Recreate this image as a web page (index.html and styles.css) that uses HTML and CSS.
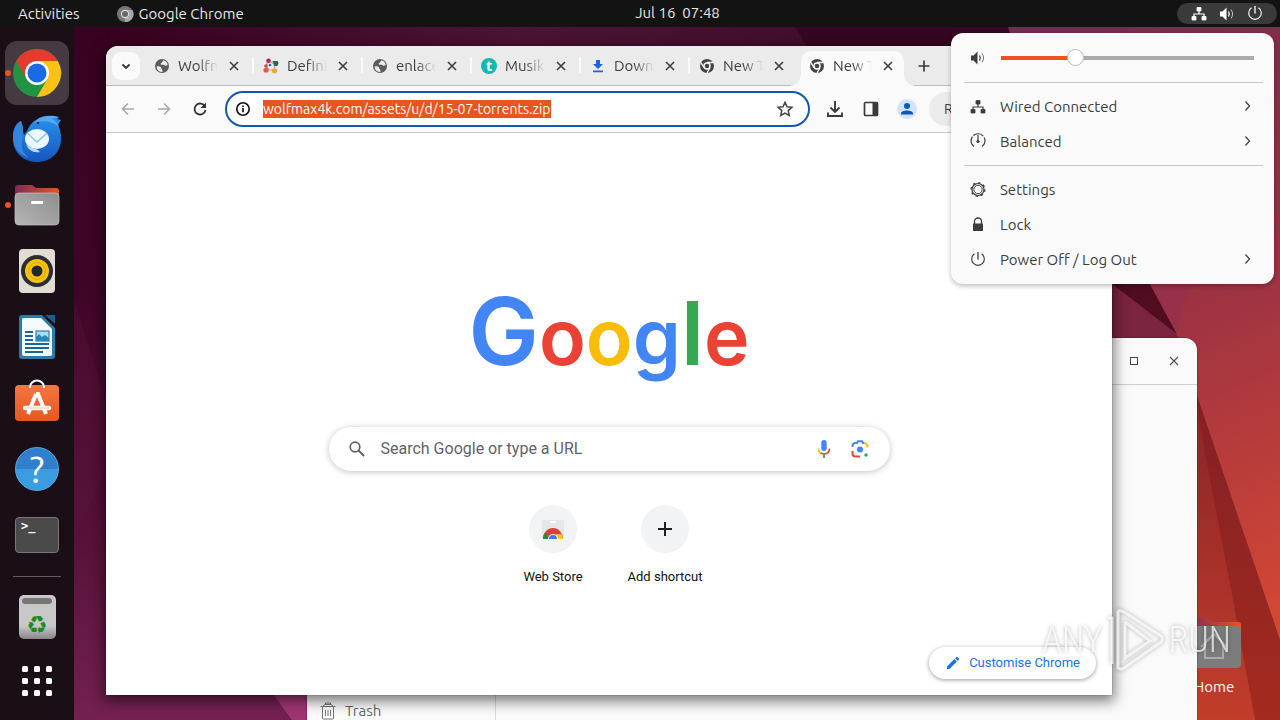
FILE: index.html
```html
<!DOCTYPE html>
<html lang="en">
<head>
<meta charset="utf-8">
<title>Desktop</title>
<link rel="stylesheet" href="styles.css">
</head>
<body>
<svg class="defs" width="0" height="0" aria-hidden="true">
  <defs>
    <symbol id="i-close" viewBox="0 0 16 16"><path d="M4 4l8 8M12 4l-8 8" stroke="currentColor" stroke-width="1.600" fill="none"/></symbol>
    <symbol id="i-globe" viewBox="0 0 16 16"><circle cx="8" cy="8" r="7" fill="#5c5c5c"/><path d="M2.800 8.200c2 .2 4.200 0 4.500 2 .2 1.300 1.500 1 1.300 3.600-3 .6-6.200-1.600-5.800-5.600zM9 2.300c2.400.2 4.200 2 4.700 4.300-.7 1.600-2.700 1.300-3.500.5-1-.9-3.200.5-3.500-1 0-1.200 2-1.200 2.300-3.800z" fill="#ebebeb"/></symbol>
    <symbol id="i-chrome-mono" viewBox="0 0 16 16"><circle cx="8" cy="8" r="7" fill="#454545"/><circle cx="8" cy="8" r="3" fill="none" stroke="#fafafa" stroke-width="1.400"/><path d="M8 4.500h6M5 9.700L2 4.600M11 9.800L8 15" stroke="#fafafa" stroke-width="1.300"/></symbol>
    <symbol id="i-net" viewBox="0 0 16 16"><path d="M6 1.500h4v3.500H6zM1 10.500h4v3.500H1zM11 10.500h4v3.500h-4z" fill="currentColor" stroke="currentColor" stroke-width=".8" stroke-linejoin="round"/><path d="M8 5v3M3 11V8h10v3" fill="none" stroke="currentColor" stroke-width="1.200"/></symbol>
    <symbol id="i-vol" viewBox="0 0 16 16"><path d="M1 5.500h2.500L7.500 1.500v13L3.500 10.500H1z" fill="currentColor"/><path d="M9.500 5.500q1.600 2.500 0 5" fill="none" stroke="currentColor" stroke-width="1.300"/><path d="M12 3.500q3.200 4.500 0 9" fill="none" stroke="currentColor" stroke-width="1" opacity=".7"/></symbol>
    <symbol id="i-power" viewBox="0 0 16 16"><path d="M4.500 1.800a6.300 6.300 0 1 0 7 0" fill="none" stroke="currentColor" stroke-width="1.100"/><path d="M8 0v7.500" stroke="currentColor" stroke-width="1.300"/></symbol>
    <symbol id="i-chev" viewBox="0 0 16 16"><path d="M6.500 2.500L10.500 7l-4 4.500" fill="none" stroke="currentColor" stroke-width="1.200"/></symbol>
  </defs>
</svg>

<div class="desktop">
  <svg class="wallpaper" viewBox="0 0 1280 720" preserveAspectRatio="none" aria-hidden="true">
    <defs>
      <linearGradient id="w-base" x1="0" y1="0" x2="0" y2="1"><stop offset="0" stop-color="#38021f"/><stop offset=".4" stop-color="#3f0527"/><stop offset=".75" stop-color="#571239"/><stop offset="1" stop-color="#742150"/></linearGradient>
      <linearGradient id="w-top" x1="0" y1="0" x2="1" y2="0"><stop offset="0" stop-color="#38021f"/><stop offset=".45" stop-color="#4b1435"/><stop offset="1" stop-color="#3c0a24"/></linearGradient>
      <linearGradient id="w-red" x1="1000" y1="27" x2="1250" y2="620" gradientUnits="userSpaceOnUse"><stop offset="0" stop-color="#772a50"/><stop offset=".45" stop-color="#963044"/><stop offset="1" stop-color="#d24634"/></linearGradient>
      <linearGradient id="w-low" x1="0" y1="400" x2="0" y2="720" gradientUnits="userSpaceOnUse"><stop offset="0" stop-color="#8a2428"/><stop offset="1" stop-color="#c23d2b"/></linearGradient>
      <linearGradient id="w-band" x1="0" y1="390" x2="0" y2="720" gradientUnits="userSpaceOnUse"><stop offset="0" stop-color="#821f26"/><stop offset="1" stop-color="#a32b1e"/></linearGradient>
    </defs>
    <rect width="1280" height="720" fill="url(#w-base)"/>
    <path d="M74 300L106 400V470L74 540Z" fill="#5f1740" opacity=".25"/>
    <path d="M106 27H1010V60H106Z" fill="url(#w-top)"/>
    <path d="M795 27L815 60H1010V27Z" fill="#370620"/>
    <path d="M270 690L292 720H310V690Z" fill="#a03573"/>
    <path d="M1008 27H1280V720H1190L1112 340Z" fill="url(#w-red)"/>
    <path d="M1105 280H1140L1180 340H1105Z" fill="#7b2440"/>
    <path d="M1112 284H1150L1177 334Z" fill="#500d20"/>
    <path d="M1150 284H1188L1177 334Z" fill="#97304a"/>
    <path d="M1195 390L1280 640V720H1190Z" fill="url(#w-low)"/>
    <path d="M1195 390L1280 640V720H1255L1233 600L1205 453Z" fill="url(#w-band)"/>
  </svg>

  <header class="topbar">
    <div class="topbar-left">
      <button class="bar-btn">Activities</button>
      <button class="bar-btn app-name">
        <svg width="16" height="16" viewBox="0 0 16 16"><circle cx="8" cy="8" r="8" fill="#777"/><path d="M8 4h7.500a8 8 0 0 1-7.500 12z" fill="#a8a8a8"/><circle cx="8" cy="8" r="4.200" fill="#ddd"/><circle cx="8" cy="8" r="3" fill="#686868"/></svg>
        Google Chrome
      </button>
    </div>
    <time class="clock">Jul 16&nbsp; 07:48</time>
    <div class="topbar-right">
      <button class="status" aria-label="System menu">
        <svg width="16" height="16"><use href="#i-net"/></svg>
        <svg width="16" height="16"><use href="#i-vol"/></svg>
        <svg width="16" height="16"><use href="#i-power"/></svg>
      </button>
    </div>
  </header>

  <nav class="dock" aria-label="Dock">
    <button class="dock-item active running" aria-label="Google Chrome">
      <svg width="48" height="48" viewBox="0 0 48 48"><circle cx="24" cy="24" r="24" fill="#229342"/><path d="M3.200 12A24 24 0 0 1 44.800 12H24L13.600 30z" fill="#e33b2e"/><path d="M44.800 12A24 24 0 0 1 24 48L34.400 30 24 12z" fill="#fbc116"/><circle cx="24" cy="24" r="12" fill="#fff"/><circle cx="24" cy="24" r="9.500" fill="#1a6ae8"/></svg>
    </button>
    <button class="dock-item" aria-label="Thunderbird">
      <svg width="50" height="48" viewBox="0 0 50 48"><defs><linearGradient id="tb" x1="0" y1="0" x2="0" y2="1"><stop offset="0" stop-color="#2c92ee"/><stop offset="1" stop-color="#1556bd"/></linearGradient></defs><path d="M9 6C3 9 1 15 1 24c0 13 10 23 24 23s24-10 24-23c0-6-1-10-3-14 1-2 2-4 3-5l-4-1 2-2C40 0 30 0 24 5c-4 2-7 6-9 11l-3 4C10 15 11 10 9 6z" fill="url(#tb)"/><path d="M9 6C1 10-1 22 3 32c3 5 8 9 14 11-5-4-8-9-7-16 0-7 3-11-1-21z" fill="#3286dd"/><path d="M22 8c6-8 17-8 25-6l-8 2c4 1 7 4 8 8-6-6-17-7-25-4z" fill="#54aaf2"/><ellipse cx="25" cy="24" rx="12" ry="10" fill="#edf7ff"/><path d="M15 18l10 9 10-9" fill="none" stroke="#8ec6e8" stroke-width="1.500"/><path d="M14 29c4 5 10 3 14 8-7 1-12-2-14-8z" fill="#b7dcf6"/><circle cx="26" cy="8" r="1.300" fill="#07336f"/></svg>
    </button>
    <button class="dock-item running" aria-label="Files">
      <svg width="46" height="42" viewBox="0 0 46 42"><defs><linearGradient id="fd" x1="0" y1="0" x2="1" y2="0"><stop offset="0" stop-color="#7d2b58"/><stop offset="1" stop-color="#e95420"/></linearGradient><linearGradient id="fg" x1="1" y1="0" x2="0" y2="1"><stop offset="0" stop-color="#8e8e8e"/><stop offset="1" stop-color="#b5b5b5"/></linearGradient></defs><path d="M1 16V4q0-3 3-3h14l4 3h20q3 0 3 3v9z" fill="url(#fd)"/><rect x="1" y="9" width="44" height="32" rx="4" fill="url(#fg)" stroke="#c4c4c4" stroke-width=".7"/><rect x="17" y="17" width="12" height="3" rx=".5" fill="#fff"/></svg>
    </button>
    <button class="dock-item" aria-label="Rhythmbox">
      <svg width="38" height="46" viewBox="0 0 38 46"><rect x="1" y="1" width="36" height="44" rx="4" fill="#e2ddd3"/><circle cx="19" cy="23" r="16" fill="#2c2d33"/><circle cx="19" cy="23" r="12" fill="#f6c30d"/><circle cx="19" cy="23" r="8.500" fill="none" stroke="#d9a90a"/><circle cx="19" cy="23" r="5.500" fill="#24272e"/></svg>
    </button>
    <button class="dock-item" aria-label="LibreOffice Writer">
      <svg width="38" height="46" viewBox="0 0 38 46"><path d="M1 4q0-3 3-3h20l13 13v28q0 3-3 3H4q-3 0-3-3z" fill="#2a7ea6"/><path d="M4 6q0-2 2-2h17l11 11v25q0 2-2 2H6q-2 0-2-2z" fill="#f5fafc"/><path d="M27 1h10v9z" fill="#19608c"/><path d="M7 18h8M7 22h8M7 26h8M7 30h24M7 34h24M7 38h18" stroke="#186a96" stroke-width="2"/><rect x="18" y="17" width="13" height="10" fill="#a8def5" stroke="#186a96"/><path d="M18 27v-4l3-3 3 3 3-2 4 3v3z" fill="#2687b8"/></svg>
    </button>
    <button class="dock-item" aria-label="Ubuntu Software">
      <svg width="46" height="46" viewBox="0 0 46 46"><defs><linearGradient id="sw" x1="0" y1="0" x2="0" y2="1"><stop offset="0" stop-color="#f37743"/><stop offset="1" stop-color="#e9561f"/></linearGradient></defs><rect x="1" y="5" width="44" height="36" rx="4" fill="url(#sw)"/><path d="M16 8V7a7 6.500 0 0 1 14 0v1" fill="none" stroke="#fff" stroke-width="2"/><path d="M22 14L14 34M22 14h2L32 34" fill="none" stroke="#fff" stroke-width="4"/><path d="M11 28h24" stroke="#fff" stroke-width="4.500" stroke-linecap="round"/><path d="M11 28h24" stroke="#f3b79c" stroke-width=".8"/></svg>
    </button>
    <button class="dock-item" aria-label="Help"><span class="help">?</span></button>
    <button class="dock-item" aria-label="Terminal"><span class="term">&gt;_</span></button>
    <hr class="dock-line">
    <button class="dock-item" aria-label="Trash"><span class="bin"><span class="bin-slot"></span><span class="bin-mark">♻</span></span></button>
    <button class="dock-item apps" aria-label="Show Applications">
      <svg width="30" height="30" viewBox="0 0 30 30" fill="#fff"><rect width="6" height="6" rx="1.500"/><rect x="12" width="6" height="6" rx="1.500"/><rect x="24" width="6" height="6" rx="1.500"/><rect y="12" width="6" height="6" rx="1.500"/><rect x="12" y="12" width="6" height="6" rx="1.500"/><rect x="24" y="12" width="6" height="6" rx="1.500"/><rect y="24" width="6" height="6" rx="1.500"/><rect x="12" y="24" width="6" height="6" rx="1.500"/><rect x="24" y="24" width="6" height="6" rx="1.500"/></svg>
    </button>
  </nav>

  <div class="home">
    <svg width="54" height="50" viewBox="0 0 54 50"><path d="M0 16V3q0-3 3-3h18l4 4h26q3 0 3 3v9z" fill="url(#fd)"/><rect y="8" width="54" height="42" rx="4" fill="#7c7c7c"/><path d="M14 29l13-13 13 13M18 27v13h18V27" fill="none" stroke="#aaa" stroke-width="2"/></svg>
    <span>Home</span>
  </div>

  <section class="files" aria-label="Files">
    <div class="files-head">
      <button class="win-btn" aria-label="Maximise"><svg width="16" height="16" viewBox="0 0 16 16"><rect x="4.500" y="4.500" width="7" height="7" fill="none" stroke="#444" stroke-width="1"/></svg></button>
      <button class="win-btn" aria-label="Close"><svg width="16" height="16" viewBox="0 0 16 16"><path d="M4 4l8 8M12 4l-8 8" stroke="#555" stroke-width="1.200"/></svg></button>
    </div>
    <div class="files-body">
      <div class="files-side">
        <a class="place" href="#trash"><svg width="16" height="18" viewBox="0 0 16 18"><path d="M2.500 5v11q0 1 1 1h9q1 0 1-1V5M.500 4.500h15M3 4l2-1.500h6L13 4M5.500 2.500V1h5v1.500M5.500 8v6M8 8v6M10.500 8v6" fill="none" stroke="#777" stroke-width="1"/></svg>Trash</a>
      </div>
    </div>
  </section>

  <main class="chrome">
    <div class="tabs">
      <button class="tab-search" aria-label="Search tabs"><svg width="16" height="16" viewBox="0 0 16 16"><path d="M4.500 6.500L8 10l3.500-3.500" fill="none" stroke="#333" stroke-width="1.800"/></svg></button>
      <div class="tab"><svg class="fav"><use href="#i-globe"/></svg><span class="tab-title">Wolfmax</span><button class="x" aria-label="Close tab"><svg><use href="#i-close"/></svg></button></div>
      <div class="tab"><svg class="fav" viewBox="0 0 16 16"><path d="M5 3l-2 5 3 4 6 0-1-6-5-3" fill="none" stroke="#b9a0a8" stroke-width="1.200"/><circle cx="5.500" cy="2.800" r="2.300" fill="#b92746"/><path d="M9.500 3h5l1 2-1 3h-3z" fill="#24655d"/><circle cx="3" cy="8" r="1.800" fill="#e23d3d"/><rect x=".5" y="10" width="5" height="4.500" rx="1.500" fill="#df5c43"/><circle cx="11.500" cy="12.800" r="2.600" fill="#e9aa34"/><circle cx="7" cy="7" r="1.300" fill="#305cb0"/></svg><span class="tab-title">Definition</span><button class="x" aria-label="Close tab"><svg><use href="#i-close"/></svg></button></div>
      <div class="tab"><svg class="fav"><use href="#i-globe"/></svg><span class="tab-title">enlaces</span><button class="x" aria-label="Close tab"><svg><use href="#i-close"/></svg></button></div>
      <div class="tab"><span class="fav fav-t">t</span><span class="tab-title">Musik</span><button class="x" aria-label="Close tab"><svg><use href="#i-close"/></svg></button></div>
      <div class="tab"><svg class="fav" viewBox="0 0 16 16"><path d="M6 2h4v4h3l-5 5-5-5h3zM3 12.500h10v1.700H3z" fill="#2463d8"/></svg><span class="tab-title">Downloads</span><button class="x" aria-label="Close tab"><svg><use href="#i-close"/></svg></button></div>
      <div class="tab last"><svg class="fav"><use href="#i-chrome-mono"/></svg><span class="tab-title">New Tab</span><button class="x" aria-label="Close tab"><svg><use href="#i-close"/></svg></button></div>
      <div class="tab current"><svg class="fav"><use href="#i-chrome-mono"/></svg><span class="tab-title">New Tab</span><button class="x" aria-label="Close tab"><svg><use href="#i-close"/></svg></button></div>
      <button class="new-tab" aria-label="New tab"><svg width="16" height="16" viewBox="0 0 16 16"><path d="M8 2.500v11M2.500 8h11" stroke="#3a3a3a" stroke-width="1.700"/></svg></button>
    </div>

    <div class="toolbar">
      <div class="nav-btns">
        <button aria-label="Back" class="dim"><svg width="20" height="20" viewBox="0 0 20 20"><path d="M16 10H5M10 4.500L4.500 10l5.500 5.500" fill="none" stroke="currentColor" stroke-width="1.500"/></svg></button>
        <button aria-label="Forward" class="dim"><svg width="20" height="20" viewBox="0 0 20 20"><path d="M4 10h11M10 4.500l5.500 5.500-5.500 5.500" fill="none" stroke="currentColor" stroke-width="1.500"/></svg></button>
        <button aria-label="Reload"><svg width="20" height="20" viewBox="0 0 20 20"><path d="M15 7.500A5.500 5.500 0 1 0 15.500 11" fill="none" stroke="#333" stroke-width="1.800"/><path d="M16 3.500v5.500h-5.500z" fill="#333"/></svg></button>
      </div>
      <div class="omnibox">
        <svg width="16" height="16" viewBox="0 0 16 16"><circle cx="8" cy="8" r="6.200" fill="none" stroke="#111" stroke-width="1.600"/><path d="M8 7v4.300M8 4.500v1.600" stroke="#111" stroke-width="1.700"/></svg>
        <div class="url-wrap"><input class="url" type="text" aria-label="Address and search bar" value="wolfmax4k.com/assets/u/d/15-07-torrents.zip" spellcheck="false"></div>
        <button aria-label="Bookmark"><svg width="18" height="18" viewBox="0 0 18 18"><path d="M9 2.300l2 4.500 4.900.5-3.700 3.300 1.100 4.900L9 13l-4.300 2.500 1.100-4.900L2.100 7.300 7 6.800z" fill="none" stroke="#444" stroke-width="1.500"/></svg></button>
      </div>
      <div class="tools">
        <button aria-label="Downloads"><svg width="20" height="20" viewBox="0 0 20 20"><path d="M10 2v11M5.500 8.500L10 13l4.500-4.500M3 13.500V17h14v-3.500" fill="none" stroke="#3a3a3a" stroke-width="1.900"/></svg></button>
        <button aria-label="Side panel"><svg width="20" height="20" viewBox="0 0 20 20"><rect x="3.500" y="3.500" width="13" height="13" rx="1" fill="none" stroke="#3a3a3a" stroke-width="1.700"/><path d="M11.500 3.500h5v13h-5z" fill="#3a3a3a"/></svg></button>
        <button aria-label="Profile"><svg width="20" height="20" viewBox="0 0 20 20"><circle cx="10" cy="10" r="10" fill="#d3e3fd"/><circle cx="10" cy="7" r="3" fill="#0b57c0"/><path d="M4 15.500v-1c0-4 12-4 12 0v1z" fill="#0b57c0"/></svg></button>
        <button class="relaunch">Relaunch</button>
      </div>
    </div>

    <div class="page">
      <h1 class="logo" aria-label="Google"><span class="big blue">G</span><span class="red">o</span><span class="yellow">o</span><span class="blue">g</span><span class="tall green">l</span><span class="red">e</span></h1>
      <label class="search">
        <svg width="20" height="20" viewBox="0 0 20 20"><circle cx="8" cy="8" r="4.800" fill="none" stroke="#5f6368" stroke-width="1.700"/><path d="M11.500 11.500l5.500 5.500" stroke="#5f6368" stroke-width="2"/></svg>
        <input type="text" placeholder="Search Google or type a URL" aria-label="Search Google or type a URL">
        <svg width="20" height="20" viewBox="0 0 20 20"><rect x="7.300" y="1" width="5.400" height="11" rx="2.700" fill="#4285f4"/><path d="M4.500 9.500q0 3 2.200 4.600" fill="none" stroke="#fbbc04" stroke-width="1.700"/><path d="M6.500 14q3.500 2 7 0 2-1.500 2-4.500" fill="none" stroke="#ea4335" stroke-width="1.700"/><path d="M10 15.500V19" stroke="#34a853" stroke-width="1.800"/></svg>
        <svg width="20" height="20" viewBox="0 0 20 20"><path d="M2.500 8V7q0-3 3-3H7l1-1.700h4L13 4h1.500" fill="none" stroke="#4285f4" stroke-width="2"/><path d="M14 4q3.500 0 3.500 4.500" fill="none" stroke="#fbbc04" stroke-width="2"/><path d="M2.500 12v2.500q0 3 3 3H10" fill="none" stroke="#ea4335" stroke-width="2"/><circle cx="10" cy="10.500" r="3" fill="#4285f4"/><circle cx="16" cy="16" r="1.700" fill="#34a853"/></svg>
      </label>
      <div class="shortcuts">
        <a class="shortcut" href="#store"><span class="disc"><svg width="24" height="24" viewBox="0 0 24 24"><path d="M1 3h22v19H1z" fill="#e4e6e8"/><rect x="9" y="4" width="6" height="2" rx="1" fill="#fff"/><path d="M2 22a10 11 0 0 1 20 0z" fill="#da4235"/><path d="M2 22q0-4 2-6.500L8 22z" fill="#1b8b4a"/><path d="M15 17h5q2 2 2 5h-7z" fill="#fbc719"/><path d="M7 22a5 5 0 0 1 10 0z" fill="#eee"/><path d="M8 22a4 4 0 0 1 8 0z" fill="#3b7ded"/></svg></span>Web Store</a>
        <a class="shortcut" href="#add"><span class="disc"><svg width="20" height="20" viewBox="0 0 20 20"><path d="M10 3v14M3 10h14" stroke="#202124" stroke-width="2"/></svg></span>Add shortcut</a>
      </div>
      <button class="customise"><svg width="16" height="16" viewBox="0 0 16 16"><path d="M2 11.500V14h2.500l7.400-7.400-2.500-2.500zM10.200 3.300l2.500 2.500 1.300-1.300q.5-.5 0-1L12.500 2q-.5-.5-1 0z" fill="#1a73e8"/></svg>Customise Chrome</button>
    </div>
  </main>

  <aside class="menu" aria-label="System menu">
    <label class="row"><svg width="16" height="16"><use href="#i-vol"/></svg><input class="volume" type="range" min="0" max="1000" value="280" aria-label="Volume"></label>
    <hr>
    <button class="row"><svg width="16" height="16"><use href="#i-net"/></svg><span>Wired Connected</span><svg width="16" height="16"><use href="#i-chev"/></svg></button>
    <button class="row"><svg width="16" height="16" viewBox="0 0 16 16"><path d="M4 12.500A7 7 0 1 1 12 12.500" fill="none" stroke="currentColor" stroke-width="1.200" stroke-dasharray="11 1.500"/><path d="M8 1v6" stroke="currentColor" stroke-width="1.200"/><circle cx="8" cy="7.500" r="1.600" fill="currentColor"/></svg><span>Balanced</span><svg width="16" height="16"><use href="#i-chev"/></svg></button>
    <hr>
    <button class="row"><svg width="16" height="16" viewBox="0 0 16 16" fill="none" stroke="currentColor"><circle cx="8" cy="7.500" r="6" stroke-width="1.200"/><circle cx="8" cy="7.500" r="4.200" stroke-width="1"/><circle cx="8" cy="7.500" r="6.900" stroke-width="1.300" stroke-dasharray="2.270 3.150"/></svg><span>Settings</span></button>
    <button class="row"><svg width="16" height="16" viewBox="0 0 16 16"><rect x="3" y="6.500" width="10" height="7.500" rx=".5" fill="currentColor"/><path d="M4.500 7V4.500a3.500 3.500 0 0 1 7 0V7" fill="none" stroke="currentColor" stroke-width="1.300"/></svg><span>Lock</span></button>
    <button class="row"><svg width="16" height="16"><use href="#i-power"/></svg><span>Power Off / Log Out</span><svg width="16" height="16"><use href="#i-chev"/></svg></button>
  </aside>

  <div class="watermark">
    <span>ANY</span>
    <svg width="58" height="64" viewBox="0 0 58 64" fill="none" stroke="rgba(255,255,255,.72)" stroke-width="3"><path d="M2 10h4v46M12 3v58M12 3q3-1 6 1l37 24q3 3 0 6L18 60q-3 2-6 0M19 14v36l25-17L19 14"/></svg>
    <span>RUN</span>
  </div>
</div>
</body>
</html>
```
FILE: styles.css
```css
* { box-sizing: border-box; }
html, body { height: 100%; margin: 0; }
body { font: 15px/20px Ubuntu, "Open Sans", "Noto Sans", sans-serif; color: #3d3d3d; overflow: hidden; }
button { font: inherit; color: inherit; background: none; border: 0; padding: 0; cursor: pointer; }
svg { display: block; flex: none; overflow: visible; }
a { color: inherit; text-decoration: none; }
.defs { position: absolute; }

.desktop { position: relative; height: 100%; min-height: 720px; overflow: hidden; display: grid; grid-template: auto 1fr / auto 1fr; }
.wallpaper { position: absolute; width: 100%; height: 100%; }

.topbar { position: relative; grid-column: 1 / 3; height: 27px; background: #131313; color: #e6e6e6; display: grid; grid-template-columns: 1fr auto 1fr; align-items: center; padding: 0 3px 0 18px; }
.topbar-left { display: flex; gap: 37px; }
.bar-btn { display: flex; align-items: center; gap: 6px; white-space: nowrap; }
.clock { margin-left: 60px; line-height: 24px; padding-bottom: 2px; }
.topbar-right { display: flex; justify-content: flex-end; }
.status { display: flex; align-items: center; gap: 12px; height: 21px; padding: 0 14px; border-radius: 11px; background: #3a3a3a; color: #fff; }

.dock { position: relative; width: 74px; background: #1b0f17; display: flex; flex-direction: column; align-items: center; gap: 2px; padding-top: 14px; }
.dock-item { position: relative; width: 64px; height: 64px; border-radius: 12px; display: grid; place-items: center; flex: none; }
.dock-item.active { background: #463a42; }
.dock-item.running::before { content: ""; position: absolute; left: 0; top: 29px; width: 6px; height: 6px; border-radius: 50%; background: #e95420; }
.dock-item.apps { height: 60px; }
.help { width: 44px; height: 44px; border-radius: 50%; background: linear-gradient(#2f7fca 50%, #3b9ce0 50%); border: 1px solid #58a8e0; color: #fff; font-size: 38px; line-height: 42px; text-align: center; }
.term { width: 44px; height: 36px; border: 1px solid #777; border-radius: 4px; background: #4a4a4a; color: #fff; font: bold 12px/16px "DejaVu Sans Mono", monospace; text-align: left; padding-left: 5px; }
.dock-line { width: 48px; height: 1px; margin: 7px 0 6px; border: 0; background: #66595f; flex: none; }
.bin { width: 37px; height: 44px; border-radius: 5px; background: linear-gradient(#c8c8c8 70%, #8c858b); display: flex; flex-direction: column; align-items: center; padding-top: 3px; }
.bin-slot { flex: none; width: 30px; height: 6px; border-radius: 3px; background: #767676; }
.bin-mark { font: 24px/35px "DejaVu Sans", sans-serif; padding-top: 4px; color: #1d8a24; }

.home { position: absolute; right: 39px; bottom: 23px; display: flex; flex-direction: column; align-items: center; gap: 9px; color: #fff; }

.files { position: absolute; left: 307px; right: 83px; top: 338px; bottom: 0; border-radius: 12px 12px 0 0; background: #fafafa; display: flex; flex-direction: column; box-shadow: 0 0 2px #0007; }
.files-head { height: 47px; border-bottom: 1px solid #cfcfcf; display: flex; justify-content: flex-end; align-items: center; gap: 24px; padding-right: 15px; }
.files-body { flex: 1; display: flex; }
.files-side { width: 189px; border-right: 1px solid #d8d8d8; display: flex; flex-direction: column; justify-content: flex-end; }
.place { display: flex; align-items: center; gap: 9px; padding-left: 13px; color: #666; margin-bottom: -1px; }

.chrome { position: absolute; left: 106px; right: 168px; top: 46px; bottom: 25px; border-radius: 12px 12px 0 0; background: #fff; display: flex; flex-direction: column; overflow: hidden; box-shadow: 0 0 1px #000a, 0 4px 14px 2px #0008; }
.tabs { height: 40px; flex: none; background: #ebebeb; border-bottom: 1px solid #b6bcc4; display: flex; align-items: flex-end; padding-left: 6px; }
.tab-search { width: 28px; height: 28px; margin: 0 5px 5px 0; border-radius: 9px; background: #fafafa; display: grid; place-items: center; }
.tab { position: relative; width: 109px; height: 33px; padding: 0 12px 5px 9px; display: flex; align-items: center; }
.tab::after { content: ""; position: absolute; right: 0; top: 5px; width: 2px; height: 16px; background: #fafafa; }
.tab.last::after { display: none; }
.tab svg { width: 16px; height: 16px; }
.tab-title { flex: 1; min-width: 0; margin: 0 8px; overflow: hidden; white-space: nowrap; mask-image: linear-gradient(90deg, #000 50%, transparent 100%); }
.fav { width: 16px; height: 16px; flex: none; }
.fav-t { border-radius: 50%; background: #12b8b3; color: #fff; font: bold 14px/15px "Open Sans", sans-serif; text-align: center; }
.tab.current { width: 103px; margin: 0 3px -1px 2px; height: 35px; padding: 0 8px 6px; background: #fafafa; border-radius: 10px 10px 0 0; }
.tab.current::before, .tab.current::after { content: ""; position: absolute; bottom: 0; top: auto; width: 10px; height: 10px; }
.tab.current::before { left: -10px; background: radial-gradient(circle at 0 0, transparent 9px, #fafafa 10px); }
.tab.current::after { right: -10px; background: radial-gradient(circle at 100% 0, transparent 9px, #fafafa 10px); }
.new-tab { margin: 0 0 11px 9px; }

.toolbar { height: 47px; flex: none; background: #fafafa; border-bottom: 1px solid #c9c9c9; display: flex; align-items: center; gap: 15px; padding: 0 12px; font-size: 14px; }
.nav-btns { display: flex; gap: 16px; }
.dim { color: #a6a6a6; }
.omnibox { flex: 1; max-width: 585px; height: 36px; border: 2px solid #1557b0; border-radius: 18px; background: #fff; display: flex; align-items: center; gap: 12px; padding: 0 14px 0 8px; }
.url-wrap { flex: 1; min-width: 0; display: flex; }
.url { field-sizing: content; border: 0; outline: 0; padding: 0; height: 18px; font: inherit; line-height: 18px; background: #e95420; color: #fff; }
.tools { display: flex; align-items: center; gap: 16px; }
.tools .relaunch { height: 34px; margin-left: -4px; padding: 0 15px; border-radius: 17px; background: #ebebeb; }

.page { position: relative; flex: 1; display: flex; flex-direction: column; align-items: center; background: #fff; font-family: Roboto, sans-serif; padding-top: 142px; }
.logo { margin: 0; height: 152px; font: 600 77px/112px Inter, Roboto, sans-serif; white-space: nowrap; }
.big { font-size: 94px; }
.tall { font-size: 88px; }
.blue { color: #4285f4; } .red { color: #ea4335; } .yellow { color: #fbbc05; } .green { color: #34a853; }
.search { width: 56%; max-width: 561px; height: 44px; border-radius: 22px; background: #fff; box-shadow: 0 1px 6px #20212447; display: flex; align-items: center; gap: 16px; padding: 0 20px 0 18px; }
.search input { flex: 1; min-width: 0; border: 0; outline: 0; padding: 0; margin-left: -2px; background: none; font: 16px/20px Roboto, sans-serif; }
.search input::placeholder { color: #5f6368; opacity: 1; }
.shortcuts { display: flex; margin-top: 34px; }
.shortcut { width: 112px; display: flex; flex-direction: column; align-items: center; gap: 14px; font-size: 13px; color: #111; }
.disc { width: 48px; height: 48px; border-radius: 50%; background: #f1f3f4; display: grid; place-items: center; }
.customise { position: absolute; right: 16px; bottom: 16px; height: 32px; padding: 0 16px; border-radius: 16px; background: #fff; box-shadow: 0 1px 4px #0006; color: #1a73e8; font-size: 13px; display: flex; align-items: center; gap: 8px; }

.menu { position: absolute; top: 33px; right: 6px; width: 323px; padding: 7px 0; border-radius: 12px; background: #fafafa; box-shadow: 0 2px 5px #0004; }
.menu hr { height: 1px; margin: 7px 11px 6px 13px; border: 0; background: #c4c4c4; }
.menu hr + .row ~ hr { margin-top: 6px; }
.row { width: 100%; height: 35px; padding: 0 19px; display: flex; align-items: center; gap: 14px; text-align: left; }
.row span { flex: 1; }
.volume { flex: 1; min-width: 0; margin: 0 1px; height: 16px; appearance: none; background: linear-gradient(90deg, #e95420 29%, #ababab 29%) center / 100% 4px no-repeat; }
.volume::-webkit-slider-thumb { appearance: none; width: 17px; height: 17px; border-radius: 50%; background: #fff; border: 1px solid #b8b8b8; }

.watermark { position: absolute; right: 49px; bottom: 48px; display: flex; align-items: center; gap: 4px; pointer-events: none; color: #ffffffb8; font: 300 36px/34px "Roboto Condensed", "Liberation Sans Narrow", Roboto, sans-serif; filter: drop-shadow(0 0 2px #0006); }
```
